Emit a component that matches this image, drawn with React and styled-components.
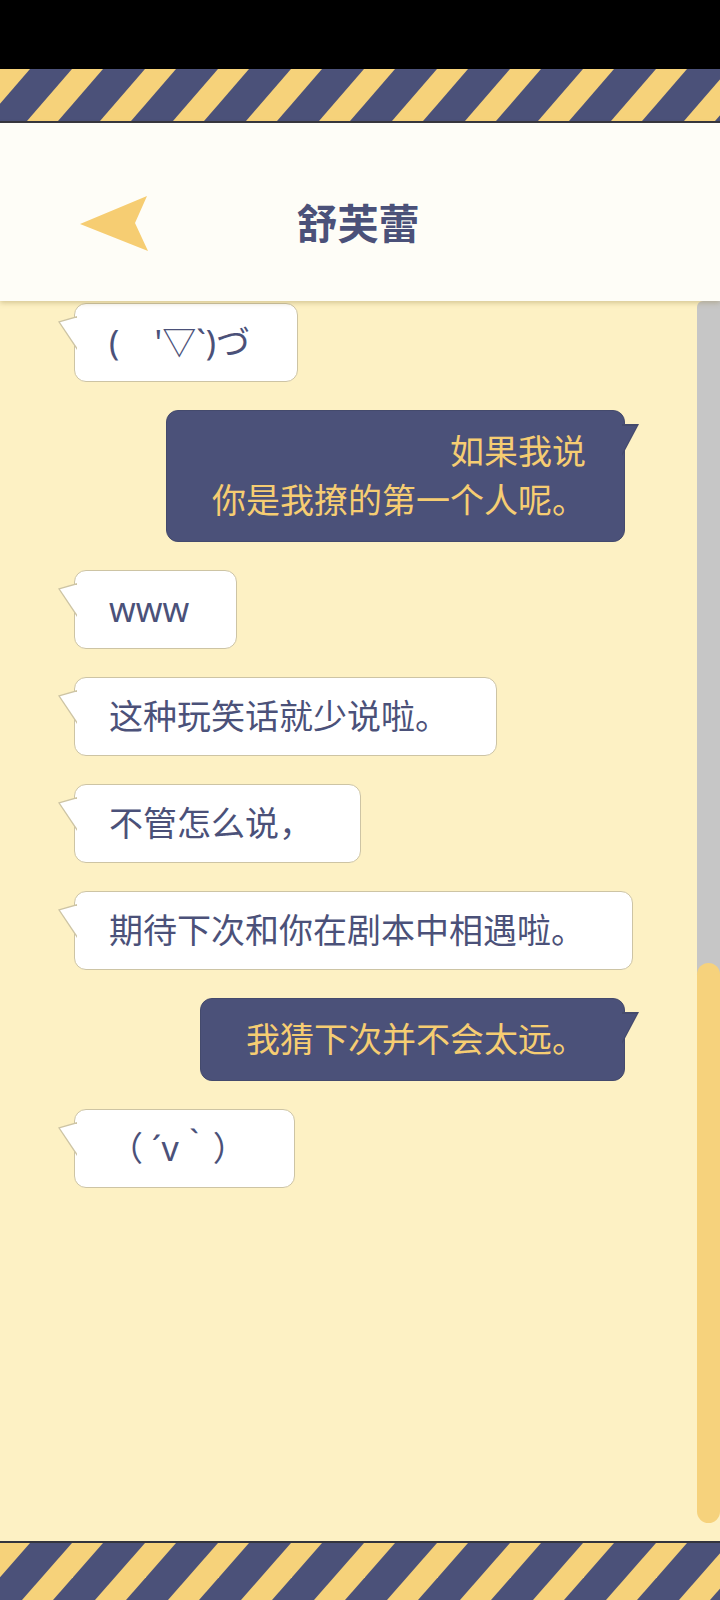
import React from "react";
import styled, { createGlobalStyle } from "styled-components";

const NAVY = "#4b5179";
const YELLOW = "#f6d27a";
const CREAM = "#fdf1c4";

const messages = [
  { mine: false, text: "(    '▽`)づ" },
  { mine: true, text: "如果我说\n你是我撩的第一个人呢。" },
  { mine: false, text: "www" },
  { mine: false, text: "这种玩笑话就少说啦。" },
  { mine: false, text: "不管怎么说，" },
  { mine: false, text: "期待下次和你在剧本中相遇啦。" },
  { mine: true, text: "我猜下次并不会太远。" },
  { mine: false, text: "（ ´v｀）" },
];

// diagonal hazard stripes, drawn as an svg pattern
const StripeBand = ({ id, height, top }) => {
  const shift = Math.round(height * 0.87);
  const offsets = [-146, -73, 0, 73, 146];
  return (
    <Stripes $top={top} $h={height}>
      <svg width="720" height={height}>
        <defs>
          <pattern id={id} width="73" height={height} patternUnits="userSpaceOnUse">
            <rect width="73" height={height} fill={NAVY} />
            {offsets.map((o) => (
              <polygon
                key={o}
                fill={YELLOW}
                points={`${72 + o},0 ${103 + o},0 ${103 + o - shift},${height} ${72 + o - shift},${height}`}
              />
            ))}
          </pattern>
        </defs>
        <rect width="720" height={height} fill={`url(#${id})`} />
      </svg>
    </Stripes>
  );
};

const ChatPage = () => {
  return (
    <Page>
      <GlobalStyle />
      <StatusBar />
      <StripeBand id="stripe-top" height={52} top />
      <Header>
        <BackButton aria-label="back">
          <svg width="70" height="57" viewBox="0 0 70 57">
            <path d="M0 29 L67 1 L55 28 L68 56 Z" fill="#f6cd72" />
          </svg>
        </BackButton>
        <Title>舒芙蕾</Title>
        <span />
      </Header>
      <Chat>
        <MessageList>
          {messages.map((m, i) => (
            <Bubble key={i} $mine={m.mine}>
              {m.text}
            </Bubble>
          ))}
        </MessageList>
        <ScrollTrack>
          <ScrollThumb />
        </ScrollTrack>
      </Chat>
      <StripeBand id="stripe-bottom" height={57} />
    </Page>
  );
};

//Styled Component
const GlobalStyle = createGlobalStyle`
  html, body {
    margin: 0;
    padding: 0;
    background: #000;
  }
  body {
    font-family: "Noto Sans", "Noto Sans CJK SC", sans-serif;
  }
  * {
    box-sizing: border-box;
  }
`;

const Page = styled.div`
  width: 720px;
  height: 1600px;
  display: flex;
  flex-direction: column;
  overflow: hidden;
  background: ${CREAM};
`;

const StatusBar = styled.div`
  height: 69px;
  flex-shrink: 0;
  background: #000;
`;

const Stripes = styled.div`
  flex-shrink: 0;
  height: ${(p) => p.$h + 2}px;
  border-${(p) => (p.$top ? "bottom" : "top")}: 2px solid #33343d;
  svg {
    display: block;
  }
`;

const Header = styled.div`
  height: 178px;
  flex-shrink: 0;
  display: grid;
  grid-template-columns: 1fr auto 1fr;
  align-items: center;
  padding-top: 18px;
  background: #fefdf7;
  box-shadow: 0 2px 5px rgba(140, 120, 60, 0.35);
  position: relative;
  z-index: 1;
`;

const BackButton = styled.button`
  justify-self: start;
  margin-left: 80px;
  margin-top: 4px;
  padding: 0;
  border: none;
  background: none;
  display: flex;
  svg {
    display: block;
  }
`;

const Title = styled.h1`
  margin: 0 0 0 -4px;
  font-family: "Noto Sans CJK SC", sans-serif;
  font-size: 41px;
  font-weight: 700;
  color: ${NAVY};
`;

const Chat = styled.div`
  flex: 1;
  display: flex;
  background: ${CREAM};
  min-height: 0;
`;

const MessageList = styled.div`
  flex: 1;
  display: flex;
  flex-direction: column;
  align-items: flex-start;
  gap: 28px;
  padding: 2px 50px 0 74px;
`;

const Bubble = styled.div`
  position: relative;
  align-self: ${(p) => (p.$mine ? "flex-end" : "flex-start")};
  margin-right: ${(p) => (p.$mine ? "22px" : "0")};
  padding: ${(p) => (p.$mine ? "16px 38px 16px 45px" : "14px 47px 14px 34px")};
  border-radius: 12px;
  border: 1.5px solid ${(p) => (p.$mine ? "#444a6c" : "#cdc4a4")};
  background: ${(p) => (p.$mine ? NAVY : "#fff")};
  color: ${(p) => (p.$mine ? "#f6cd72" : NAVY)};
  text-align: ${(p) => (p.$mine ? "right" : "left")};
  font-size: 34px;
  line-height: 49px;
  white-space: pre;

  &::before,
  &::after {
    content: "";
    position: absolute;
  }

  &::before {
    ${(p) =>
      p.$mine
        ? `
      right: -15px;
      top: 13px;
      width: 17px;
      height: 32px;
      background: #444a6c;
      clip-path: polygon(0 0, 100% 0, 0 100%);
    `
        : `
      left: -17px;
      top: 12px;
      width: 19px;
      height: 34px;
      background: #cdc4a4;
      clip-path: polygon(100% 0, 0 16%, 100% 100%);
    `}
  }

  &::after {
    ${(p) =>
      p.$mine
        ? `
      right: -13px;
      top: 14.5px;
      width: 15px;
      height: 28px;
      background: ${NAVY};
      clip-path: polygon(0 0, 100% 0, 0 100%);
    `
        : `
      left: -15px;
      top: 13.5px;
      width: 17px;
      height: 30px;
      background: #fff;
      clip-path: polygon(100% 0, 0 16%, 100% 100%);
    `}
  }
`;

const ScrollTrack = styled.div`
  width: 23px;
  flex-shrink: 0;
  background: linear-gradient(#c6c6c6, #c6c6c6) no-repeat top / 100% 675px;
  border-top-left-radius: 6px;
`;

const ScrollThumb = styled.div`
  margin-top: 662px;
  height: 560px;
  border-radius: 12px;
  background: #f6d27c;
`;

export default ChatPage;
